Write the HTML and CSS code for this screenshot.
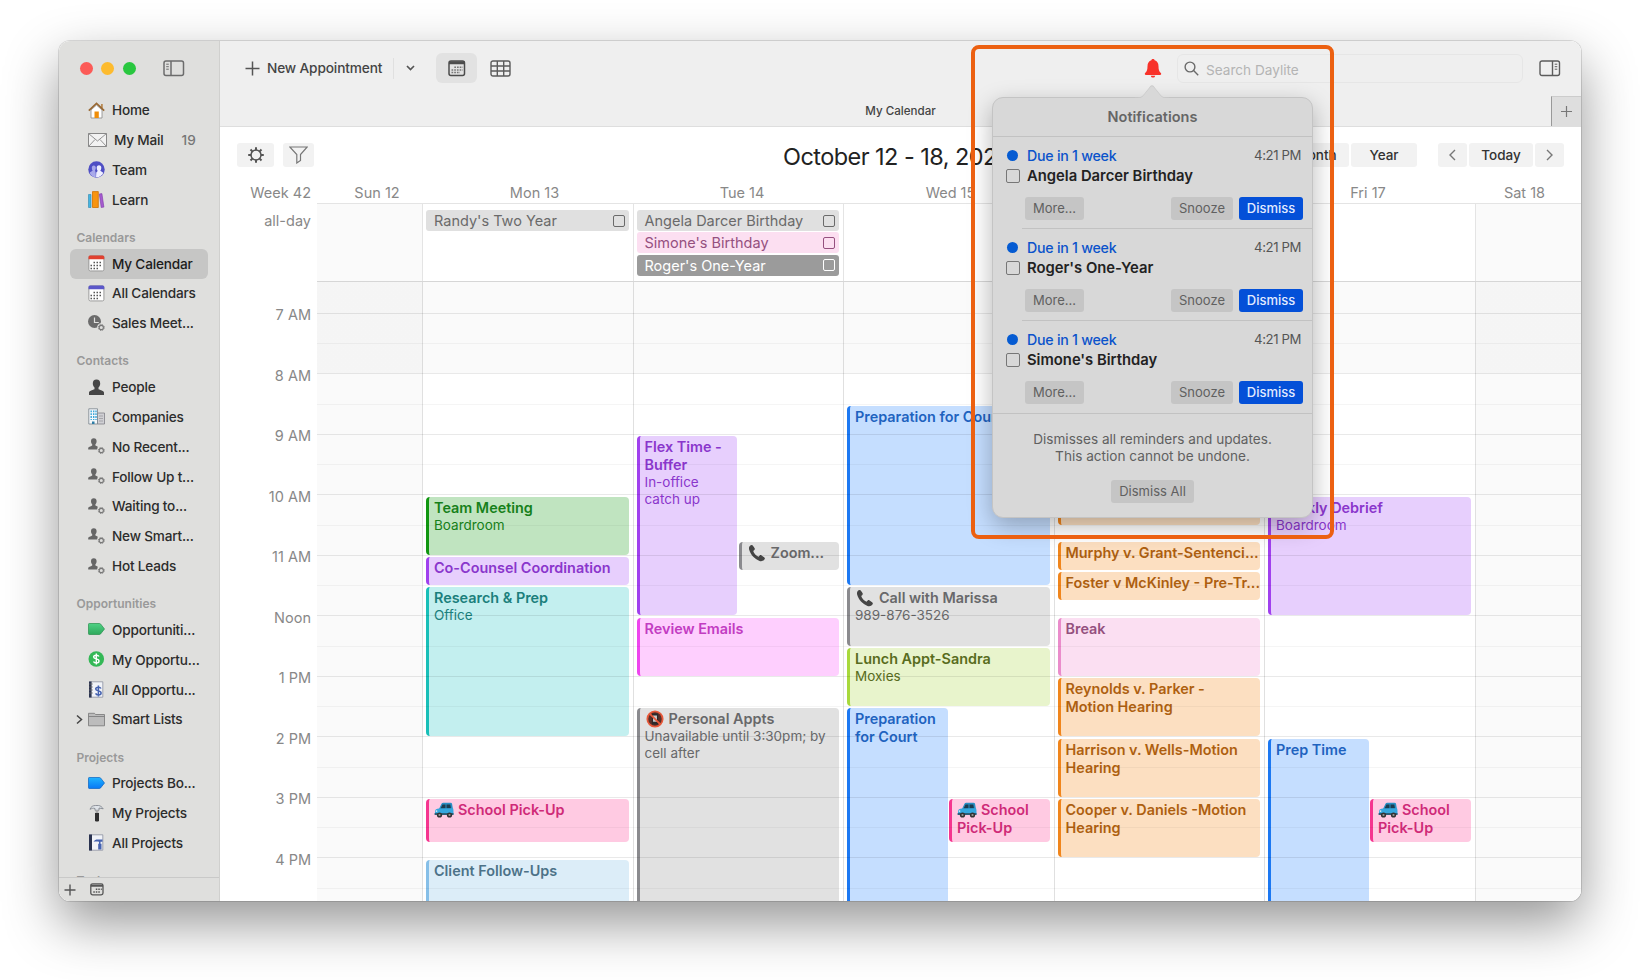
FILE: index.html
```html
<!DOCTYPE html>
<html lang="en">
<head>
    <meta charset="utf-8">
    <title>My Calendar</title>
    <link rel="stylesheet" href="styles.css">
</head>
<body>
    <!-- shared icons -->
    <svg class="defs">
        <defs>
            <linearGradient id="g-green" x1="0" y1="0" x2="0" y2="1"><stop offset="0" stop-color="#4fd184"/><stop offset="1" stop-color="#2fa95c"/></linearGradient>
            <linearGradient id="g-blue" x1="0" y1="0" x2="0" y2="1"><stop offset="0" stop-color="#1fb4ff"/><stop offset="1" stop-color="#0878f5"/></linearGradient>
        </defs>
        <symbol id="i-smart" viewBox="0 0 17 17">
            <path d="M5.8 0.3c1.9 0 2.8 1.3 2.8 3 0 1.300-.5 2.300-1.200 3v1.300l2.200 1v3H0.200V10c0-.9 2.300-1.500 4-2.400V6.300C3.500 5.600 3 4.600 3 3.300c0-1.700.9-3 2.800-3z" fill="#666"/>
            <circle cx="13.300" cy="12.500" r="4.300" fill="#dfdfdd"/>
            <circle cx="13.300" cy="12.500" r="2.100" fill="none" stroke="#777" stroke-width="1.100"/>
            <circle cx="13.300" cy="12.500" r="3" fill="none" stroke="#777" stroke-width="1" stroke-dasharray="1.200 1.156"/>
        </symbol>
        <symbol id="i-car" viewBox="0 0 20 17">
            <path d="M5 7.500 7.500 2.200Q8 1.200 9.200 1.200h7.300q1.400 0 1.600 1.300l.9 5.500z" fill="#2a8fc4"/>
            <path d="M6.600 7 8.500 3h3v4zM12.500 3h3.800l.7 4h-4.500z" fill="#1d3c50"/>
            <path d="M1 12.500V9.500Q1.200 7.300 5 7l14-.3q.6 1 .5 6.300z" fill="#35a7de"/>
            <path d="M.6 11.500h18.900v2H.6z" fill="#2b5f78"/>
            <circle cx="5.500" cy="13.500" r="2.600" fill="#333"/><circle cx="5.500" cy="13.500" r="1.100" fill="#999"/>
            <circle cx="15.500" cy="13.500" r="2.600" fill="#333"/><circle cx="15.500" cy="13.500" r="1.100" fill="#999"/>
            <circle cx="2.500" cy="9.600" r=".9" fill="#d8e8ee"/>
        </symbol>
        <symbol id="i-phone" viewBox="0 0 20 20">
            <path d="M3.800 1C1.500 1.500 0.600 3.800 1.300 6.500c1.600 5.600 6 10.300 11.500 12.300 2.600.8 5.200-.3 5.900-2.300.2-.6 0-1.200-.5-1.600l-3.400-2.300c-.6-.4-1.300-.3-1.800.2l-1.300 1.300C9 13 6.600 10.300 5.800 7.700l1.300-1.100c.5-.5.600-1.200.3-1.800L5.300 1.600C5 1.100 4.400.9 3.800 1z" fill="#454545"/>
        </symbol>
    </svg>

    <div class="window">
        <aside class="sidebar">
            <div class="titlebar">
                <span class="light red"></span><span class="light yellow"></span><span class="light green"></span>
                <svg class="toggle" width="22" height="17" viewBox="0 0 22 17" fill="none" stroke="#6c6c6c" stroke-width="1.500"><rect x="1" y="1" width="19.500" height="14.500" rx="2"/><path d="M8 1v14.500"/><path d="M3.200 4.200h2.600M3.200 6.700h2.600M3.200 9.200h2.600" stroke-width="1"/></svg>
            </div>

            <nav class="nav">
                <ul>
                    <li><svg class="icon" viewBox="0 0 17 17"><path d="M13 2h1.800v4H13z" fill="#b98b55"/><path d="M3 8 8.500 3 14 8v8H3z" fill="#fff" stroke="#888" stroke-width=".8"/><path d="M.8 8.600 8.500 1.300l7.700 7.300" fill="none" stroke="#9a6a35" stroke-width="1.700"/><path d="M6.500 9.500h4.300V16H6.500z" fill="#ef8d08"/></svg>Home</li>
                    <li class="mail"><svg class="icon wide" viewBox="0 0 19 14" fill="#f2f2f2" stroke="#888"><path d="M.5.5h18v13H.5z"/><path d="m.5.5 9 7.500 9-7.500M.5 13.500l6.500-7M18.500 13.500 12 6.500" fill="none" stroke-width=".9"/></svg>My Mail<span class="count">19</span></li>
                    <li><svg class="icon" viewBox="0 0 17 17"><circle cx="8.500" cy="8.500" r="8.200" fill="#4f4fc4"/><path d="M5.800 4.500c1.400 0 2 1 2 2.300S7.200 9 7 9.500c.5 1 1 3 .8 6.800C4 16 2 13.500 1.700 11.500L4.600 9.800C4.200 9 3.800 8 3.800 6.800s.6-2.300 2-2.300z" fill="#a9a9ea"/><path d="M11 4.300c1.500 0 2.300 1.100 2.300 2.500 0 1.200-.4 2.200-1 2.900l3 2c-1 3-4 4.800-7.300 4.600l.3-4.800 1.400-1.600c-.7-.8-1-1.900-1-3.100 0-1.400.8-2.500 2.300-2.500z" fill="#eef"/></svg>Team</li>
                    <li><svg class="icon" viewBox="0 0 17 17"><path d="M.5 3.500H3v13H.5z" fill="#45b5e2" stroke="#2b87ae" stroke-width=".6"/><path d="M4.500.6h5.800v15.900H4.500z" fill="#f79410" stroke="#cf7200" stroke-width=".8"/><path d="m11.300 3 2.600-.4 2 13.500-2.700.4z" fill="#a65cd0" stroke="#7d3ba6" stroke-width=".6"/></svg>Learn</li>
                </ul>

                <h4>Calendars</h4>
                <ul>
                    <li class="selected"><svg class="icon" viewBox="0 0 17 17"><rect x=".9" y=".9" width="15" height="15" rx="1.500" fill="#fff" stroke="#888" stroke-width=".8"/><path d="M.5 4.300V2Q.5.500 2 .5h12.800q1.500 0 1.500 1.500v2.300z" fill="#e0402f"/><path d="M5.500 7.500h9M2.500 10.500h12M2.500 13.500h8.500" stroke="#555" stroke-width="1.500" stroke-dasharray="1.500 1.500"/></svg>My Calendar</li>
                    <li><svg class="icon" viewBox="0 0 17 17"><rect x=".9" y=".9" width="15" height="15" rx="1.500" fill="#fff" stroke="#888" stroke-width=".8"/><path d="M.5 4.300V2Q.5.500 2 .5h12.800q1.500 0 1.500 1.500v2.300z" fill="#5b57c9"/><path d="M5.500 7.500h9M2.500 10.500h12M2.500 13.500h8.500" stroke="#555" stroke-width="1.500" stroke-dasharray="1.500 1.500"/></svg>All Calendars</li>
                    <li><svg class="icon" viewBox="0 0 17 17"><circle cx="6.500" cy="6.500" r="6.500" fill="#6b6b6b"/><path d="M6.500 2.500v5h4.300" fill="none" stroke="#dfdfdd" stroke-width="1.200"/><circle cx="13.300" cy="12.500" r="4.300" fill="#dfdfdd"/><circle cx="13.300" cy="12.500" r="2.100" fill="none" stroke="#777" stroke-width="1.100"/><circle cx="13.300" cy="12.500" r="3" fill="none" stroke="#777" stroke-dasharray="1.200 1.156"/></svg>Sales Meet...</li>
                </ul>

                <h4>Contacts</h4>
                <ul>
                    <li><svg class="icon" viewBox="0 0 17 17"><path d="M8.500.5c2.500 0 3.700 1.600 3.700 4 0 1.700-.7 3.100-1.700 4v1.700c2.300.9 5.500 1.700 5.500 3.500V16H1v-2.300c0-1.800 3.200-2.600 5.500-3.500V8.500c-1-.9-1.700-2.300-1.700-4 0-2.400 1.200-4 3.700-4z" fill="#464646"/></svg>People</li>
                    <li><svg class="icon" viewBox="0 0 17 17"><path d="M9.500 5h7v11h-7z" fill="#d0d0d4" stroke="#808088" stroke-width=".8"/><path d="M11 8h4M11 10.500h4M11 13h4" stroke="#9a9aa0" stroke-width=".8"/><path d="M.8.800h8.700V16H.8z" fill="#f4f8fa" stroke="#77828a" stroke-width=".8"/><path d="M3.200 2.500v9.500M5.700 2.500v9.500M8 2.500v9.500" stroke="#3aa6d8" stroke-width="1.400" stroke-dasharray="1.800 1"/><path d="M4 13.500h2.500V16H4z" fill="#2c7ca5"/></svg>Companies</li>
                    <li><svg class="icon"><use href="#i-smart"/></svg>No Recent...</li>
                    <li><svg class="icon"><use href="#i-smart"/></svg>Follow Up t...</li>
                    <li><svg class="icon"><use href="#i-smart"/></svg>Waiting to...</li>
                    <li><svg class="icon"><use href="#i-smart"/></svg>New Smart...</li>
                    <li><svg class="icon"><use href="#i-smart"/></svg>Hot Leads</li>
                </ul>

                <h4>Opportunities</h4>
                <ul>
                    <li><svg class="icon" viewBox="0 0 17 17"><path d="M.5 3.200Q.5 2.500 1.200 2.500h10.300q.6 0 1 .4l4 5.100-4 5q-.4.500-1 .5H1.200q-.7 0-.7-.7z" fill="url(#g-green)" stroke="#27904c" stroke-width=".7"/></svg>Opportuniti...</li>
                    <li><svg class="icon" viewBox="0 0 17 17"><circle cx="8.300" cy="8" r="7.800" fill="#34b856"/><path d="M11 5.500C10.500 4.500 9.500 4.200 8.300 4.200c-1.500 0-2.700.7-2.700 1.900C5.600 8.500 11 7.200 11 9.900c0 1.300-1.200 2-2.700 2-1.300 0-2.400-.5-2.800-1.500M8.300 2.600v10.900" fill="none" stroke="#fff" stroke-width="1.400"/></svg>My Opportu...</li>
                    <li><svg class="icon" viewBox="0 0 17 17"><path d="M1.500.8h13.300v15.400H1.500z" fill="#f1f3f8" stroke="#8a8fa0" stroke-width=".8"/><path d="M1 .5h2.600v16H1z" fill="#2a3350"/><path d="M1 3h3.800M1 6h3.800M1 9h3.800M1 12h3.800" stroke="#666" stroke-width=".8"/><path d="M13 7.500c-.5-1-1.400-1.300-2.600-1.300-1.500 0-2.700.7-2.700 1.900 0 2.400 5.400 1.100 5.400 3.800 0 1.300-1.200 2-2.700 2-1.300 0-2.400-.5-2.800-1.500M10.400 4.600v10.900" fill="none" stroke="#4562b0" stroke-width="1.500"/></svg>All Opportu...</li>
                    <li class="folder"><svg class="chev" width="7" height="11" viewBox="0 0 7 11" fill="none" stroke="#444" stroke-width="1.500"><path d="m1 1.500 4.500 4L1 9.500"/></svg><svg class="icon" viewBox="0 0 17 17"><path d="M.5 2.300h6l1 1.200h9v11.300H.5z" fill="#bcbcbc" stroke="#808080" stroke-width=".9"/><path d="M.5 5.500h16" stroke="#808080" stroke-width=".9"/></svg>Smart Lists</li>
                </ul>

                <h4>Projects</h4>
                <ul>
                    <li><svg class="icon" viewBox="0 0 17 17"><path d="M.5 3.200Q.5 2.500 1.200 2.500h10.300q.6 0 1 .4l4 5.100-4 5q-.4.500-1 .5H1.200q-.7 0-.7-.7z" fill="url(#g-blue)" stroke="#0a62c0" stroke-width=".7"/></svg>Projects Bo...</li>
                    <li><svg class="icon" viewBox="0 0 17 17"><path d="M2 4.300C3 1.500 5 .5 7.500.5h3c2 .2 3.500 1.500 4.700 3.300l-4.200-.8v2.300H7V3.500c-2-.7-3 0-5 .8z" fill="#dfe3e8" stroke="#7a7f88" stroke-width=".8"/><path d="M7.600 5h2.800v3H7.600z" fill="#aaa"/><path d="M7 8h4v8q-2 1-4 0z" fill="#2e2e2e"/></svg>My Projects</li>
                    <li><svg class="icon" viewBox="0 0 17 17"><path d="M1.500.8h13.300v15.400H1.500z" fill="#f1f3f8" stroke="#8a8fa0" stroke-width=".8"/><path d="M1 .5h3v16H1z" fill="#2a3350"/><path d="M5.500 7.800c1-1.800 2.500-2.300 4-2.300h5v2.300h-2v2h1v5.700h-3.300V9.800h.8v-2c-2-.6-3.500-.5-5.500 0z" fill="#4562b0"/></svg>All Projects</li>
                </ul>
                <h4>Tasks</h4>
            </nav>

            <div class="side-foot">
                <svg width="12" height="12" viewBox="0 0 12 12" stroke="#555" stroke-width="1.400"><path d="M6 .5v11M.5 6h11"/></svg>
                <svg width="14" height="13" viewBox="0 0 14 13"><rect x=".8" y=".8" width="12.200" height="11" rx="1.800" fill="none" stroke="#555" stroke-width="1.300"/><path d="M1 2.800h12" stroke="#555" stroke-width="2"/><path d="M5.800 6.300h6M3.300 9h7" stroke="#555" stroke-width="1.500" stroke-dasharray="1.500 1"/></svg>
            </div>
        </aside>

        <main class="main">
            <header class="toolbar">
                <div class="tools">
                    <svg width="15" height="15" viewBox="0 0 15 15" stroke="#555" stroke-width="1.500"><path d="M7.500.5v14M.5 7.500h14"/></svg>
                    <span class="new">New Appointment</span>
                    <span class="sep"></span>
                    <svg class="drop" width="9" height="6" viewBox="0 0 9 6" fill="none" stroke="#555" stroke-width="1.700"><path d="m1 1 3.500 3.500L8 1"/></svg>
                    <span class="view-btn"><svg width="18" height="17" viewBox="0 0 18 17"><rect x="1" y="1" width="15.500" height="14.500" rx="2" fill="none" stroke="#4c4c4c" stroke-width="1.500"/><path d="M1 2.700h15.500" stroke="#4c4c4c" stroke-width="3"/><path d="M6.300 7.200h8.500M3.500 9.900h11.300M3.500 12.600h8.500" stroke="#777" stroke-width="1.500" stroke-dasharray="1.700 1"/></svg></span>
                    <svg class="table" width="21" height="17" viewBox="0 0 21 17" fill="none" stroke="#5c5c5c" stroke-width="1.400"><rect x="1" y="1" width="19" height="15" rx="2"/><path d="M1 6h19M1 11h19M7.300 1v15M13.700 1v15"/></svg>
                    <svg class="bell" width="18" height="19" viewBox="0 0 18 19" fill="#f8322a"><path d="M9 0c.9 0 1.500.5 1.600 1.300C13.200 2 14.500 4.300 14.500 7.200c0 4 .8 5.300 2.400 6.900.7.800.2 1.900-.8 1.900H1.900c-1 0-1.500-1.100-.8-1.900 1.600-1.600 2.400-2.900 2.400-6.900C3.500 4.300 4.800 2 7.400 1.300 7.500.5 8.100 0 9 0zM6.800 16.700h4.400c-.2 1.200-1 1.900-2.200 1.900s-2-.7-2.200-1.900z"/></svg>
                    <div class="search"><svg width="15" height="15" viewBox="0 0 15 15" fill="none" stroke="#6a6a6a" stroke-width="1.400"><circle cx="6" cy="6" r="4.900"/><path d="m9.600 9.600 4.600 4.600"/></svg><span>Search Daylite</span></div>
                    <svg class="panel" width="22" height="17" viewBox="0 0 22 17" fill="none" stroke="#5c5c5c" stroke-width="1.400"><rect x="1" y="1" width="19.500" height="14.500" rx="2"/><path d="M13.500 1v14.500"/><path d="M15.700 4.200h2.600M15.700 6.700h2.600M15.700 9.200h2.600" stroke-width="1"/></svg>
                </div>
                <div class="tabs">
                    <span class="tab">My Calendar</span>
                    <span class="add-tab"><svg width="11" height="11" viewBox="0 0 11 11" stroke="#777" stroke-width="1.200"><path d="M5.500 0v11M0 5.500h11"/></svg></span>
                </div>
            </header>

            <div class="cal-head">
                <span class="btn gear"><svg width="18" height="18" viewBox="0 0 18 18" fill="none" stroke="#555"><circle cx="9" cy="9" r="5" stroke-width="1.500"/><path d="M9 1.200v3M9 13.800v3M1.200 9h3M13.800 9h3M3.500 3.500l2.100 2.100M12.400 12.400l2.100 2.100M3.500 14.500l2.100-2.100M12.400 5.600l2.100-2.100" stroke-width="2"/></svg></span>
                <span class="btn filter"><svg width="19" height="18" viewBox="0 0 19 18" fill="none" stroke="#777" stroke-width="1.200"><path d="M.8 1h17.400l-6.700 7.500v6L7.800 17V8.500z"/></svg></span>
                <h1>October 12 - 18, 2025</h1>
                <div class="range"><span class="btn">Month</span><span class="btn">Year</span></div>
                <div class="step">
                    <span class="btn arrow"><svg width="7" height="12" viewBox="0 0 7 12" fill="none" stroke="#777" stroke-width="1.400"><path d="M6 1 1 6l5 5"/></svg></span>
                    <span class="btn today">Today</span>
                    <span class="btn arrow"><svg width="7" height="12" viewBox="0 0 7 12" fill="none" stroke="#777" stroke-width="1.400"><path d="m1 1 5 5-5 5"/></svg></span>
                </div>
            </div>

            <div class="days">
                <span class="gutter">Week 42</span>
                <span>Sun 12</span><span>Mon 13</span><span>Tue 14</span><span>Wed 15</span><span>Thu 16</span><span>Fri 17</span><span>Sat 18</span>
            </div>

            <div class="allday">
                <span class="gutter">all-day</span>
                <div class="cell weekend"></div>
                <div class="cell"><p class="chip grey">Randy's Two Year<i></i></p></div>
                <div class="cell">
                    <p class="chip grey">Angela Darcer Birthday<i></i></p>
                    <p class="chip pink">Simone's Birthday<i></i></p>
                    <p class="chip dark">Roger's One-Year<i></i></p>
                </div>
                <div class="cell"></div>
                <div class="cell"></div>
                <div class="cell"></div>
                <div class="cell weekend"></div>
            </div>

            <!-- one grid row = 15 minutes, row 1 = 6:30 AM -->
            <div class="hours">
                <div class="gutter times">
                    <span>7 AM</span><span>8 AM</span><span>9 AM</span><span>10 AM</span><span>11 AM</span><span>Noon</span><span>1 PM</span><span>2 PM</span><span>3 PM</span><span>4 PM</span>
                </div>
                <div class="week">
                    <div class="day weekend"></div>
                    <div class="day">
                        <div class="event green" style="grid-row: 15 / 19"><b>Team Meeting</b><p>Boardroom</p></div>
                        <div class="event purple" style="grid-row: 19 / 21"><b>Co-Counsel Coordination</b></div>
                        <div class="event teal" style="grid-row: 21 / 31"><b>Research &amp; Prep</b><p>Office</p></div>
                        <div class="event rose" style="grid-row: 35 / 38"><b><svg class="emoji"><use href="#i-car"/></svg>School Pick-Up</b></div>
                        <div class="event sky" style="grid-row: 39 / 44"><b>Client Follow-Ups</b></div>
                    </div>
                    <div class="day">
                        <div class="event purple left" style="grid-row: 11 / 23"><b>Flex Time -<br>Buffer</b><p>In-office<br>catch up</p></div>
                        <div class="event grey right" style="grid-row: 18 / 20"><b><svg class="emoji"><use href="#i-phone"/></svg>Zoom...</b></div>
                        <div class="event magenta" style="grid-row: 23 / 27"><b>Review Emails</b></div>
                        <div class="event grey" style="grid-row: 29 / 44"><b><svg class="emoji" viewBox="0 0 20 20"><circle cx="10" cy="10" r="9.500" fill="#e8593a"/><circle cx="10" cy="10" r="7.500" fill="#5a2f28"/><rect x="6.500" y="4" width="7" height="12" rx="1.300" fill="#2b2b2b"/><path d="M7.800 6h4.400v7H7.800z" fill="#c8c8c8"/><path d="m4 4 12 12" stroke="#e8593a" stroke-width="2"/></svg>Personal Appts</b><p>Unavailable until 3:30pm; by<br>cell after</p></div>
                    </div>
                    <div class="day">
                        <div class="event blue" style="grid-row: 9 / 21"><b>Preparation for Court</b></div>
                        <div class="event grey" style="grid-row: 21 / 25"><b><svg class="emoji"><use href="#i-phone"/></svg>Call with Marissa</b><p>989-876-3526</p></div>
                        <div class="event lime" style="grid-row: 25 / 29"><b>Lunch Appt-Sandra</b><p>Moxies</p></div>
                        <div class="event blue left" style="grid-row: 29 / 44"><b>Preparation<br>for Court</b></div>
                        <div class="event rose right" style="grid-row: 35 / 38"><b><svg class="emoji"><use href="#i-car"/></svg>School<br>Pick-Up</b></div>
                    </div>
                    <div class="day">
                        <div class="event orange" style="grid-row: 11 / 17"></div>
                        <div class="event orange" style="grid-row: 18 / 20"><b>Murphy v. Grant-Sentenci...</b></div>
                        <div class="event orange" style="grid-row: 20 / 22"><b>Foster v McKinley - Pre-Tr...</b></div>
                        <div class="event pink" style="grid-row: 23 / 27"><b>Break</b></div>
                        <div class="event orange" style="grid-row: 27 / 31"><b>Reynolds v. Parker -<br>Motion Hearing</b></div>
                        <div class="event orange" style="grid-row: 31 / 35"><b>Harrison v. Wells-Motion<br>Hearing</b></div>
                        <div class="event orange" style="grid-row: 35 / 39"><b>Cooper v. Daniels -Motion<br>Hearing</b></div>
                    </div>
                    <div class="day">
                        <div class="event purple" style="grid-row: 15 / 23"><b>Weekly Debrief</b><p>Boardroom</p></div>
                        <div class="event blue left" style="grid-row: 31 / 44"><b>Prep Time</b></div>
                        <div class="event rose right" style="grid-row: 35 / 38"><b><svg class="emoji"><use href="#i-car"/></svg>School<br>Pick-Up</b></div>
                    </div>
                    <div class="day weekend"></div>
                </div>
                <div class="lines">
                    <i></i><i></i><i></i><i></i><i></i><i></i><i></i><i></i><i></i><i></i>
                </div>
            </div>
        </main>

        <section class="popover">
            <svg class="tip" width="34" height="14" viewBox="0 0 34 14"><path d="M0 13.500c6 0 7-1 9.500-4L15 2.500q2-2.400 4 0l5.500 7c2.500 3 3.500 4 9.500 4v.5H0z" fill="#d8d8d8"/></svg>
            <h2>Notifications</h2>
            <article>
                <div class="due"><span class="dot"></span>Due in 1 week<time>4:21 PM</time></div>
                <div class="what"><i></i>Angela Darcer Birthday</div>
                <div class="acts"><span class="more">More...</span><span class="snooze">Snooze</span><span class="dismiss">Dismiss</span></div>
            </article>
            <article>
                <div class="due"><span class="dot"></span>Due in 1 week<time>4:21 PM</time></div>
                <div class="what"><i></i>Roger's One-Year</div>
                <div class="acts"><span class="more">More...</span><span class="snooze">Snooze</span><span class="dismiss">Dismiss</span></div>
            </article>
            <article>
                <div class="due"><span class="dot"></span>Due in 1 week<time>4:21 PM</time></div>
                <div class="what"><i></i>Simone's Birthday</div>
                <div class="acts"><span class="more">More...</span><span class="snooze">Snooze</span><span class="dismiss">Dismiss</span></div>
            </article>
            <footer>
                <p>Dismisses all reminders and updates.<br>This action cannot be undone.</p>
                <span class="all">Dismiss All</span>
            </footer>
        </section>
        <div class="highlight"></div>
    </div>
</body>
</html>
```

FILE: styles.css
```css
* { box-sizing: border-box; margin: 0; padding: 0; }
body {
    width: 1640px;
    height: 980px;
    overflow: hidden;
    background: #fff;
    font-family: Inter, "Liberation Sans", sans-serif;
    font-size: 14px;
    color: #333;
    padding: 41px 59px;
}
svg { display: block; flex: none; }
i { font-style: normal; }
ul { list-style: none; }
.defs { position: absolute; width: 0; height: 0; }

.window {
    position: relative;
    display: flex;
    width: 1522px;
    height: 860px;
    border-radius: 11px;
    overflow: hidden;
    background: #fff;
}
body::before {
    content: "";
    position: absolute;
    left: 59px;
    top: 41px;
    width: 1522px;
    height: 860px;
    border-radius: 11px;
    box-shadow: 0 0 0 1px rgba(0,0,0,.12), 0 22px 54px rgba(0,0,0,.42);
}

/* sidebar */
.sidebar {
    width: 161px;
    display: flex;
    flex-direction: column;
    background: #dfdfdd;
    border-right: 1px solid #d0d0ce;
}
.titlebar { height: 54px; flex: none; display: flex; align-items: center; padding-left: 21px; gap: 8.300px; }
.light { width: 13px; height: 13px; border-radius: 50%; }
.red { background: #fc5b57; }
.yellow { background: #fdbb2e; }
.green.light { background: #29c73f; }
.toggle { margin-left: 19px; }
.nav { flex: 1; overflow: hidden; padding-top: .4px; }
.nav li {
    display: flex;
    align-items: center;
    height: 29.830px;
    margin: 0 11px;
    padding-left: 18px;
    gap: 7px;
    border-radius: 6px;
    color: #2c2c2c;
    font-size: 13.600px;
    letter-spacing: -.19px;
    font-weight: 450;
    white-space: nowrap;
}
.nav .selected { background: #c6c6c5; color: #1c1c1c; }
.nav h4 {
    height: 34px;
    padding: 15.300px 0 0 17.500px;
    font-size: 12px;
    line-height: 16px;
    font-weight: 600;
    color: #999;
}
.icon { width: 17px; height: 17px; }
.icon.wide { width: 19px; height: 14px; }
.count { margin-left: 11px; color: #777; letter-spacing: 0; }
.nav .folder { padding-left: 6px; gap: 0; }
.folder .icon { margin: 0 7px 0 5px; }
.side-foot { height: 24px; flex: none; display: flex; align-items: center; gap: 14px; padding-left: 5px; border-top: 1px solid #c9c9c8; }

/* toolbar */
.main { width: 1361px; display: flex; flex-direction: column; }
.toolbar { height: 86px; flex: none; background: #efefef; border-bottom: 1px solid #dedede; }
.tools { height: 55px; display: flex; align-items: center; padding: 0 20px 1px 25px; }
.new { width: 116px; margin-left: 7px; font-size: 13.700px; letter-spacing: -.15px; font-weight: 450; color: #444; white-space: nowrap; }
.sep { width: 1px; height: 21px; margin: 0 12px 0 10px; background: #e0e0e0; }
.view-btn { width: 41px; height: 30px; margin-left: 21px; display: flex; align-items: center; justify-content: center; border-radius: 6px; background: #e2e2e2; }
.table { margin-left: 13px; }
.bell { margin-left: auto; }
.search {
    width: 346px;
    height: 29px;
    margin: 1px 0 0 15px;
    display: flex;
    align-items: center;
    gap: 7px;
    padding-left: 6px;
    border: 1px solid #e6e6e6;
    border-radius: 6px;
    font-size: 13.600px;
    color: #b4b4b4;
}
.search span { padding-top: 2px; }
.panel { margin-left: 16px; }
.tabs { height: 30px; display: flex; }
.tab { flex: 1; padding-left: 30px; text-align: center; line-height: 30px; font-size: 11.600px; font-weight: 450; color: #444; }
.add-tab { width: 30px; display: flex; align-items: center; justify-content: center; background: #dedede; border-left: 1px solid #999; border-top: 1px solid #ccc; }

/* range header */
.cal-head { height: 57px; flex: none; display: flex; align-items: center; padding: 0 17px 1px 17px; }
.btn { height: 24px; display: flex; align-items: center; justify-content: center; border-radius: 3px; background: #f2f2f2; color: #333; font-size: 13.500px; font-weight: 500; }
.gear { width: 37px; margin-right: 9px; }
.filter { width: 31px; }
h1 { flex: none; margin: 3px 0 0 469px; font-size: 23.500px; letter-spacing: -.55px; font-weight: 400; color: #222; white-space: nowrap; }
.range { display: flex; gap: 2px; margin-left: auto; }
.range .btn { width: 66px; }
.step { display: flex; gap: 2px; margin-left: 21px; }
.arrow { width: 29px; }
.today { width: 64px; }

/* week */
.allday { display: grid; grid-template-columns: 97px 105px repeat(5, 210.500px) 106.500px; height: 78px; flex: none; }
.days { display: grid; grid-template-columns: 97px 120px 195px 220px 197px 219px 200px 113px; height: 19px; font-size: 14.500px; line-height: 18px; color: #888; text-align: center; }
.gutter { text-align: right; padding-right: 6px; font-size: 14.500px; color: #888; }
.allday .gutter { line-height: 36px; }
.cell { border-top: 1px solid #e4e4e4; border-left: 1px solid #e4e4e4; padding: 6px 4px 0 3px; }
.weekend { background: #fafafa; }
.cell:nth-child(2), .day:first-child { border-left: 0; }
.chip { display: flex; align-items: center; justify-content: space-between; height: 21px; margin-bottom: 1.400px; padding: 0 4px 0 8px; border-radius: 3px; font-size: 14.500px; }
.chip i { width: 12px; height: 12px; border: 1px solid currentColor; border-radius: 2px; }
.chip.grey { background: #e0e0e0; color: #6a6a6a; }
.chip.pink { background: #fcdff1; color: #95507f; }
.chip.dark { background: #9b9b9b; color: #fff; }

.hours { display: grid; grid-template-columns: 97px 1264px; height: 620px; flex: none; }
.times { display: flex; flex-direction: column; padding-top: 4px; }
.times span { height: 60.500px; line-height: 60.500px; }
.week { grid-area: 1 / 2; display: grid; grid-template-columns: 105px repeat(5, 210.500px) 106.500px; height: 620px; overflow: hidden; }
.day {
    display: grid;
    grid-template-columns: 100.500px 100.500px;
    grid-template-rows: repeat(43, 15.125px);
    column-gap: 1.500px;
    padding: 1.800px 3.500px 0 3px;
    border-left: 1px solid #e0e0e0;
}
/* hour lines run over the events */
.lines { grid-area: 1 / 2; z-index: 1; height: 620px; border-top: 1px solid #d6d6d6; padding-top: 30.500px; background: linear-gradient(rgba(0,0,0,.018) 91px, transparent 91px); }
.lines i { display: block; height: 60.500px; padding-top: 29.500px; border-top: 1px solid rgba(0,0,0,.085); }
.lines i::after { content: ""; display: block; border-top: 1px solid rgba(0,0,0,.04); }

.event { grid-column: 1 / 3; margin: 2px 0 .3px; padding: 2px 0 0 5px; border-left: 3px solid; border-radius: 4px; overflow: hidden; line-height: 18px; white-space: nowrap; }
.event.left { grid-column: 1; }
.event.right { grid-column: 2; }
.event b { display: block; font-size: 14.400px; font-weight: 600; }
.event p { font-size: 13.500px; line-height: 17px; }
.emoji { display: inline-block; width: 20px; height: 18px; margin: -1px 4px -1px 0; vertical-align: -3px; }
.event.green { background: #c0e4c0; border-color: #109610; color: #16801a; }
.event.purple { background: #e7cffd; border-color: #a040ee; color: #8a36cc; }
.event.teal { background: #c3efef; border-color: #18bfb8; color: #1b807c; }
.event.rose { background: #ffcae2; border-color: #f5358f; color: #cf2a78; }
.event.sky { background: #dcedf8; border-color: #86bfe8; color: #4c7288; }
.event.grey { background: #e1e1e1; border-color: #8a8a8e; color: #68686a; }
.event.magenta { background: #fecffe; border-color: #ee44ee; color: #c23cc2; }
.event.blue { background: #c5deff; border-color: #1c78f2; color: #1f63bf; }
.event.lime { background: #e8f4cc; border-color: #a8d93c; color: #586c20; }
.event.orange { background: #fcdfc1; border-color: #f0851c; color: #ae5f10; }
.event.pink { background: #fbdff2; border-color: #ea8ccb; color: #94507e; }

/* notifications */
.popover {
    position: absolute;
    z-index: 2;
    left: 933px;
    top: 56px;
    width: 321px;
    height: 421px;
    background: #d8d8d8;
    border: 1px solid #c4c4c4;
    border-radius: 11px;
    box-shadow: 0 8px 24px rgba(0,0,0,.28);
}
.tip { position: absolute; left: 142px; top: -13px; filter: drop-shadow(0 -1px 0 #cacaca); }
.popover h2 { height: 38px; line-height: 38px; text-align: center; font-size: 14.500px; font-weight: 600; color: #666; }
article { height: 92.200px; padding: 9px 9px 0 13px; border-top: 1px solid #c2c2c2; }
article + article { margin-left: 29px; padding-left: 0; }
article + article .due, article + article .what { margin-left: -16px; }
article + article .acts { padding-left: 3px; }
.due { display: flex; align-items: center; height: 18px; color: #0b53cb; font-size: 14.200px; letter-spacing: -.25px; font-weight: 550; }
.dot { width: 11px; height: 11px; margin: 0 9px 0 1px; border-radius: 50%; background: #055bd2; }
time { margin-left: auto; padding-right: 2px; color: #555; font-size: 13.200px; letter-spacing: -.4px; font-weight: 400; }
.what { display: flex; align-items: center; height: 23px; padding-top: 1px; color: #222; font-size: 14.800px; font-weight: 600; }
.what i { width: 14px; height: 14px; margin-right: 7px; border: 1.500px solid #777; border-radius: 2px; }
.acts { display: flex; align-items: center; margin-top: 10px; padding-left: 19px; font-size: 13px; }
.acts span, .all { height: 23px; line-height: 23px; text-align: center; border-radius: 3px; background: #c5c5c5; color: #606060; }
.acts .more { width: 59px; }
.acts .snooze { width: 62px; margin-left: auto; }
.acts .dismiss { width: 64px; margin-left: 6px; background: #0450d8; color: #e2ebff; font-weight: 500; }
footer { border-top: 1px solid #c2c2c2; padding-top: 17px; text-align: center; font-size: 13.600px; line-height: 17px; color: #606060; }
.all { display: block; width: 83px; margin: 15px auto 0; font-size: 13px; }

.highlight { position: absolute; z-index: 3; left: 912px; top: 4px; width: 363px; height: 494px; border: 4px solid #ec6011; border-radius: 8px; }
```
